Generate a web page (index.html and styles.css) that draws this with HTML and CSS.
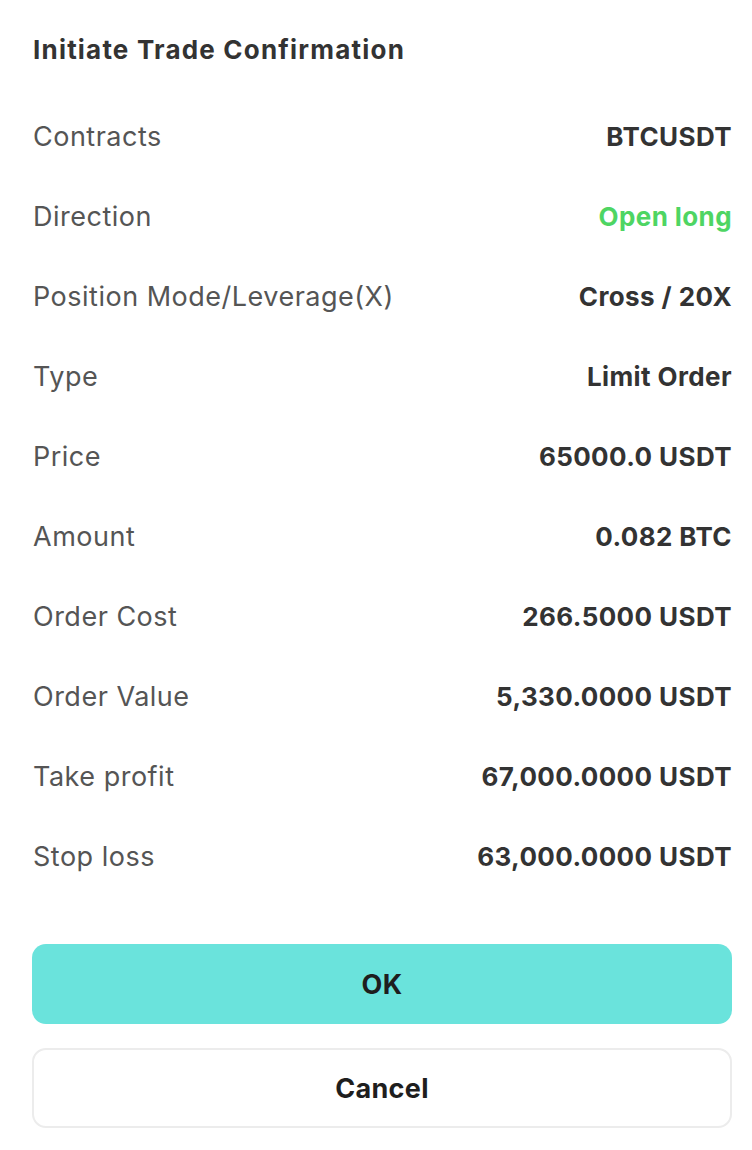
FILE: index.html
```html
<!DOCTYPE html>
<html lang="en">
<head>
<meta charset="utf-8">
<title>Initiate Trade Confirmation</title>
<link rel="stylesheet" href="styles.css">
</head>
<body>
<div class="dialog">
  <h1 class="title">Initiate Trade Confirmation</h1>
  <div class="rows">
    <div class="row"><span class="label">Contracts</span><span class="value">BTCUSDT</span></div>
    <div class="row"><span class="label">Direction</span><span class="value green">Open long</span></div>
    <div class="row"><span class="label">Position Mode/Leverage(X)</span><span class="value">Cross / 20X</span></div>
    <div class="row"><span class="label">Type</span><span class="value">Limit Order</span></div>
    <div class="row"><span class="label">Price</span><span class="value">65000.0 USDT</span></div>
    <div class="row"><span class="label">Amount</span><span class="value">0.082 BTC</span></div>
    <div class="row"><span class="label">Order Cost</span><span class="value">266.5000 USDT</span></div>
    <div class="row"><span class="label">Order Value</span><span class="value">5,330.0000 USDT</span></div>
    <div class="row"><span class="label">Take profit</span><span class="value">67,000.0000 USDT</span></div>
    <div class="row"><span class="label">Stop loss</span><span class="value">63,000.0000 USDT</span></div>
  </div>
  <div class="actions">
    <button class="btn btn-ok">OK</button>
    <button class="btn btn-cancel">Cancel</button>
  </div>
</div>
</body>
</html>
```
FILE: styles.css
```css
html, body {
  margin: 0;
  padding: 0;
  background: #ffffff;
}
body {
  font-family: Inter, "Noto Sans", sans-serif;
  color: #333333;
}
.dialog {
  width: 700px;
  padding: 30px 20px 0 32px;
}
.title {
  margin: 0;
  height: 40px;
  line-height: 40px;
  font-size: 26px;
  font-weight: 700;
  letter-spacing: 1.2px;
  color: #333333;
  padding-left: 1px;
}
.rows {
  display: flex;
  flex-direction: column;
  margin-top: 26px;
}
.row {
  display: flex;
  justify-content: space-between;
  align-items: center;
  height: 80px;
}
.label {
  font-size: 27px;
  letter-spacing: 0.5px;
  color: #555555;
  padding-left: 1px;
}
.value {
  font-size: 26px;
  font-weight: 700;
  letter-spacing: 0.4px;
  color: #333333;
}
.green { color: #4ed563; }
.actions {
  display: flex;
  flex-direction: column;
  gap: 24px;
  margin-top: 48px;
}
.btn {
  height: 80px;
  border-radius: 14px;
  font-family: Inter, "Noto Sans", sans-serif;
  font-size: 27px;
  font-weight: 700;
  letter-spacing: 0.3px;
  color: #1e1e1e;
  cursor: pointer;
}
.btn-ok {
  background: #6ae3dc;
  border: none;
}
.btn-cancel {
  background: #ffffff;
  border: 2px solid #ececec;
}
```
